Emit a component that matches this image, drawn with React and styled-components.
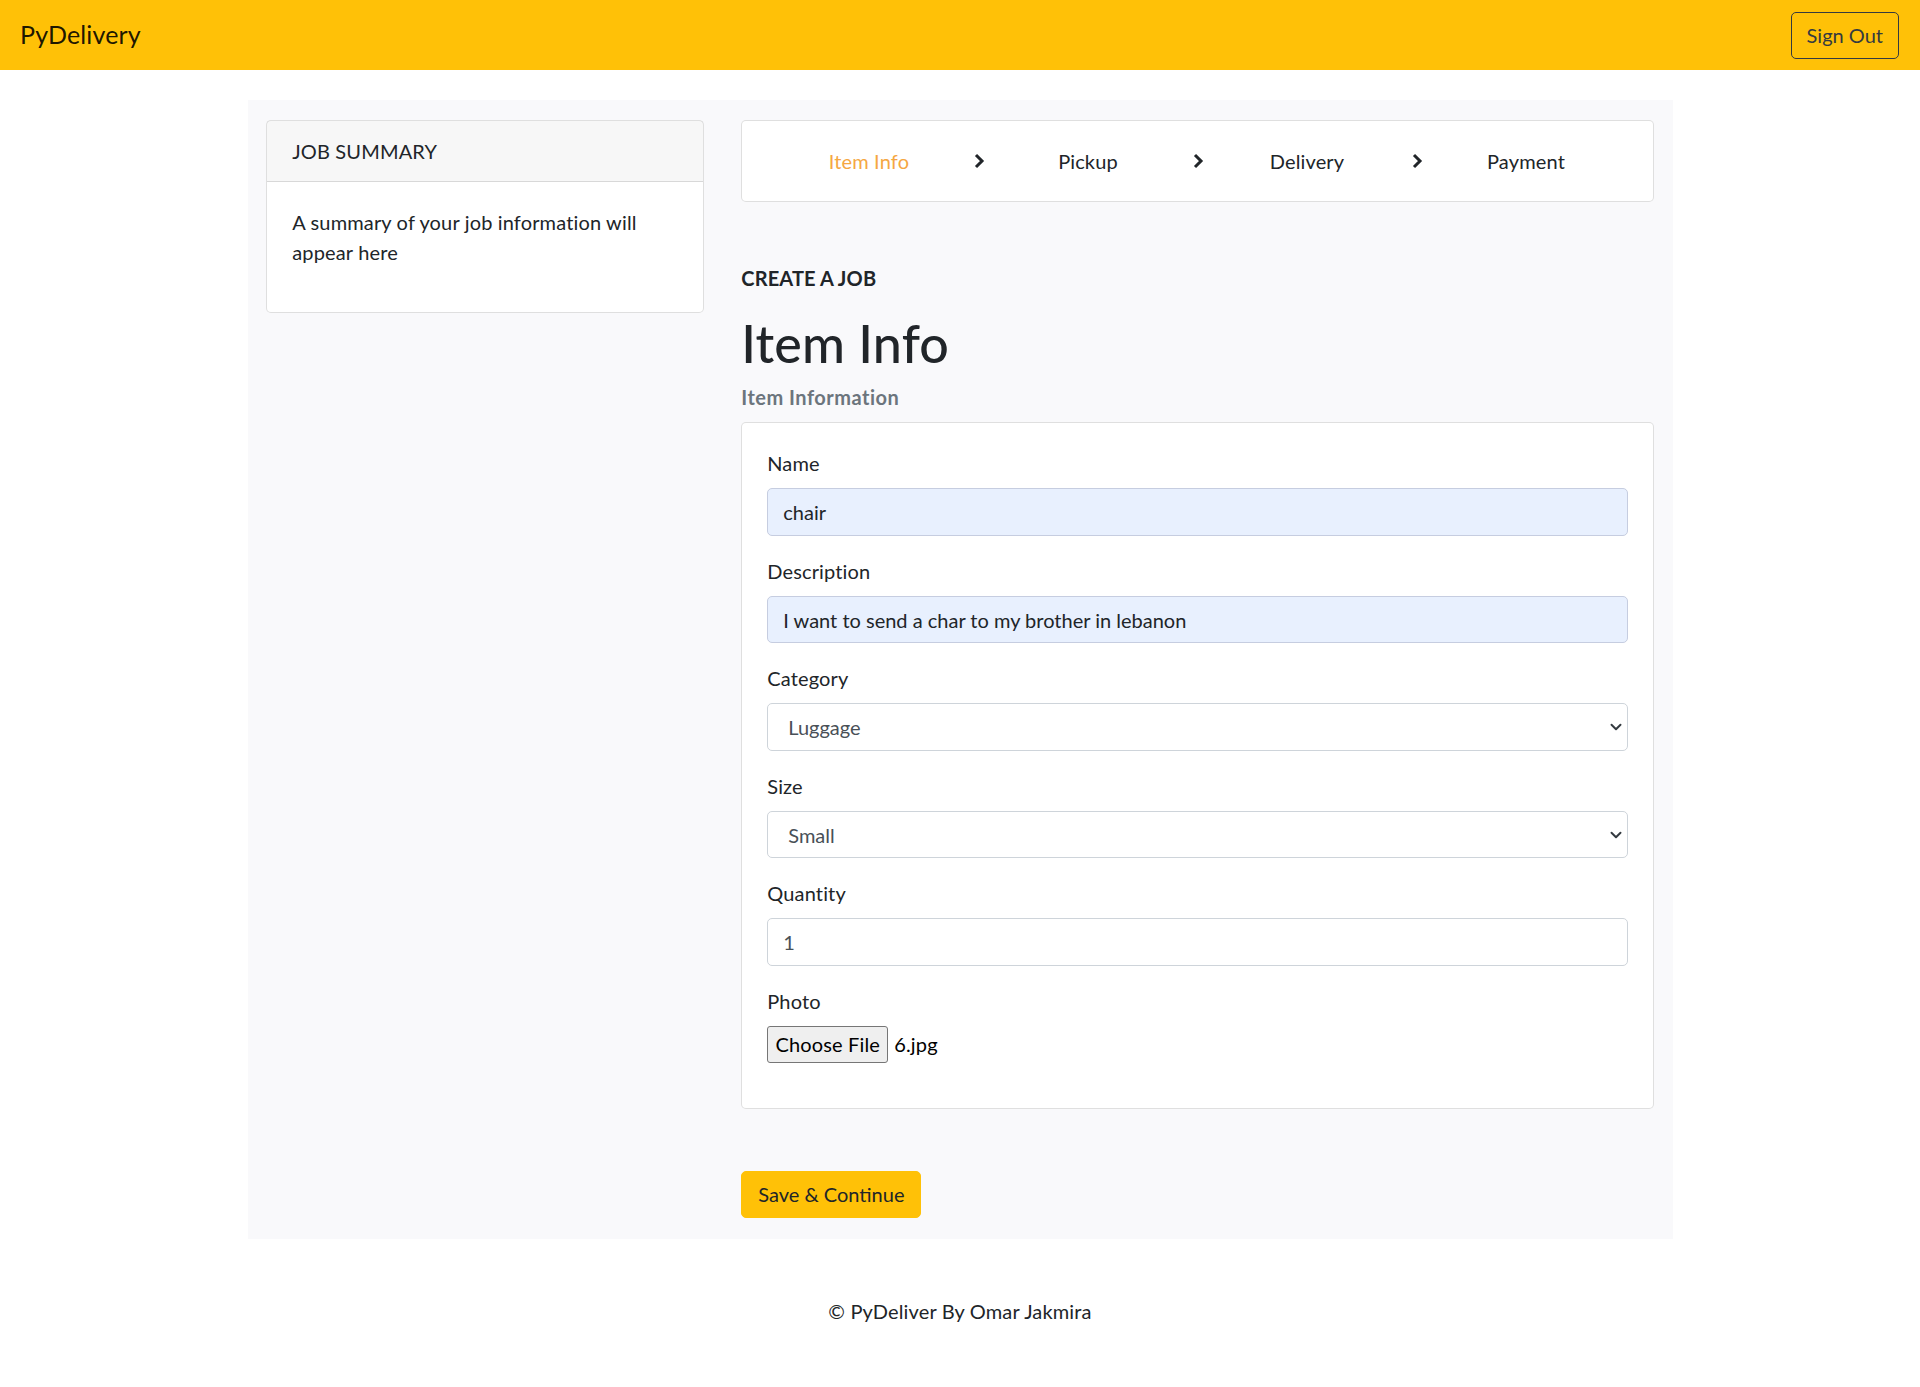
import React from "react";
import styled, { createGlobalStyle } from "styled-components";

const Global = createGlobalStyle`
  body {
    margin: 0;
    background: #fff;
    color: #212529;
    font-family: Lato, "Open Sans", sans-serif;
    font-size: 20px;
    line-height: 1.5;
    letter-spacing: 0.15px;
  }
  * { box-sizing: border-box; }
`;

const Navbar = styled.nav`
  height: 70px;
  background: #ffc107;
  display: flex;
  align-items: center;
  justify-content: space-between;
  padding: 0 21px 0 20px;
`;

const Brand = styled.a`
  font-size: 25px;
  color: rgba(0, 0, 0, 0.9);
  text-decoration: none;
`;

const OutlineButton = styled.button`
  font: inherit;
  font-size: 20px;
  height: 47px;
  padding: 0 15px;
  color: #343a40;
  background: transparent;
  border: 1px solid #343a40;
  border-radius: 5px;
`;

const Container = styled.main`
  width: 1425px;
  margin: 30px auto 0;
  background: #f9f9fb;
  padding: 20px 18.75px 21px;
  display: grid;
  grid-template-columns: 437.5px 1fr;
  column-gap: 37.5px;
  align-items: start;
`;

const Card = styled.div`
  background: #fff;
  border: 1px solid rgba(0, 0, 0, 0.125);
  border-radius: 5px;
`;

const CardHeader = styled.div`
  padding: 15px 25px;
  background: rgba(0, 0, 0, 0.03);
  border-bottom: 1px solid rgba(0, 0, 0, 0.125);
`;

const CardBody = styled.div`
  padding: 25px;
  p { margin: 0 0 20px; }
`;

const Steps = styled(Card)`
  display: flex;
  justify-content: center;
  padding: 25px 0;
`;

const Step = styled.span`
  width: 109.5px;
  text-align: center;
  line-height: 30px;
  color: ${(p) => (p.active ? "#f5a742" : "#212529")};
  display: flex;
  align-items: center;
  justify-content: center;
`;

const Eyebrow = styled.h6`
  margin: 61px 0 19px;
  font-size: 20px;
  font-weight: 700;
  line-height: 30px;
`;

const Title = styled.h1`
  margin: 0 0 8px;
  font-size: 52px;
  font-weight: 500;
  line-height: 1.2;
`;

const Subtitle = styled.h6`
  margin: 0 0 10px;
  font-size: 20px;
  font-weight: 700;
  line-height: 30px;
  color: #6c757d;
  letter-spacing: 0.5px;
`;

const FormGroup = styled.div`
  margin-bottom: 20px;
`;

const Label = styled.label`
  display: block;
  line-height: 30px;
  margin-bottom: 10px;
`;

const Input = styled.input`
  display: block;
  width: 100%;
  height: 47.5px;
  padding: 7.5px 15px;
  font: inherit;
  font-size: 20px;
  color: ${(p) => (p.muted ? "#495057" : "#212529")};
  background: ${(p) => (p.filled ? "#e8f0fe" : "#fff")};
  border: 1px solid ${(p) => (p.filled ? "#c6cde0" : "#ced4da")};
  border-radius: 5px;
  outline: none;
`;

const SelectWrap = styled.div`
  position: relative;
  svg {
    position: absolute;
    right: 6px;
    top: 18px;
    pointer-events: none;
  }
`;

const Select = styled.select`
  display: block;
  width: 100%;
  height: 47.5px;
  padding: 7.5px 40px 7.5px 20px;
  font: inherit;
  font-size: 20px;
  color: #495057;
  background: #fff;
  border: 1px solid #ced4da;
  border-radius: 5px;
  appearance: none;
  outline: none;
`;

const FileRow = styled.div`
  display: flex;
  align-items: center;
  gap: 6px;
  height: 37px;
`;

const FileButton = styled.span`
  height: 37px;
  width: 121px;
  display: flex;
  align-items: center;
  justify-content: center;
  background: #efefef;
  border: 1px solid #767676;
  border-radius: 3px;
  font-size: 20px;
  color: #000;
`;

const FileName = styled.span`
  color: #000;
`;

const PrimaryButton = styled.button`
  margin-top: 62px;
  font: inherit;
  font-size: 20px;
  height: 47px;
  padding: 0 16px;
  color: #212529;
  background: #ffc107;
  border: 1px solid #ffc107;
  border-radius: 5px;
`;

const Footer = styled.footer`
  text-align: center;
  margin: 57px 0 40px;
  line-height: 30px;
`;

const Chevron = () => (
  <svg width="12" height="16" viewBox="0 0 12 16">
    <polyline points="3,2 9,8 3,14" fill="none" stroke="#212529" strokeWidth="3" strokeLinejoin="miter" />
  </svg>
);

const Caret = () => (
  <svg width="12" height="12" viewBox="0 0 16 16">
    <path d="M2 5l6 6 6-6" fill="none" stroke="#343a40" strokeWidth="2.6" strokeLinecap="round" strokeLinejoin="round" />
  </svg>
);

export default function App() {
  const steps = ["Item Info", "Pickup", "Delivery", "Payment"];
  return (
    <>
      <Global />
      <Navbar>
        <Brand href="#">PyDelivery</Brand>
        <OutlineButton>Sign Out</OutlineButton>
      </Navbar>
      <Container>
        <Card>
          <CardHeader>JOB SUMMARY</CardHeader>
          <CardBody>
            <p>A summary of your job information will appear here</p>
          </CardBody>
        </Card>
        <div>
          <Steps>
            {steps.map((s, i) => (
              <React.Fragment key={s}>
                {i > 0 && (
                  <Step>
                    <Chevron />
                  </Step>
                )}
                <Step active={i === 0}>{s}</Step>
              </React.Fragment>
            ))}
          </Steps>
          <Eyebrow>CREATE A JOB</Eyebrow>
          <Title>Item Info</Title>
          <Subtitle>Item Information</Subtitle>
          <Card>
            <CardBody>
              <FormGroup>
                <Label>Name</Label>
                <Input filled defaultValue="chair" />
              </FormGroup>
              <FormGroup>
                <Label>Description</Label>
                <Input filled defaultValue="I want to send a char to my brother in lebanon" />
              </FormGroup>
              <FormGroup>
                <Label>Category</Label>
                <SelectWrap>
                  <Select defaultValue="Luggage">
                    <option>Luggage</option>
                  </Select>
                  <Caret />
                </SelectWrap>
              </FormGroup>
              <FormGroup>
                <Label>Size</Label>
                <SelectWrap>
                  <Select defaultValue="Small">
                    <option>Small</option>
                  </Select>
                  <Caret />
                </SelectWrap>
              </FormGroup>
              <FormGroup>
                <Label>Quantity</Label>
                <Input muted defaultValue="1" />
              </FormGroup>
              <FormGroup>
                <Label>Photo</Label>
                <FileRow>
                  <FileButton>Choose File</FileButton>
                  <FileName>6.jpg</FileName>
                </FileRow>
              </FormGroup>
            </CardBody>
          </Card>
          <PrimaryButton>Save &amp; Continue</PrimaryButton>
        </div>
      </Container>
      <Footer>© PyDeliver By Omar Jakmira</Footer>
    </>
  );
}
